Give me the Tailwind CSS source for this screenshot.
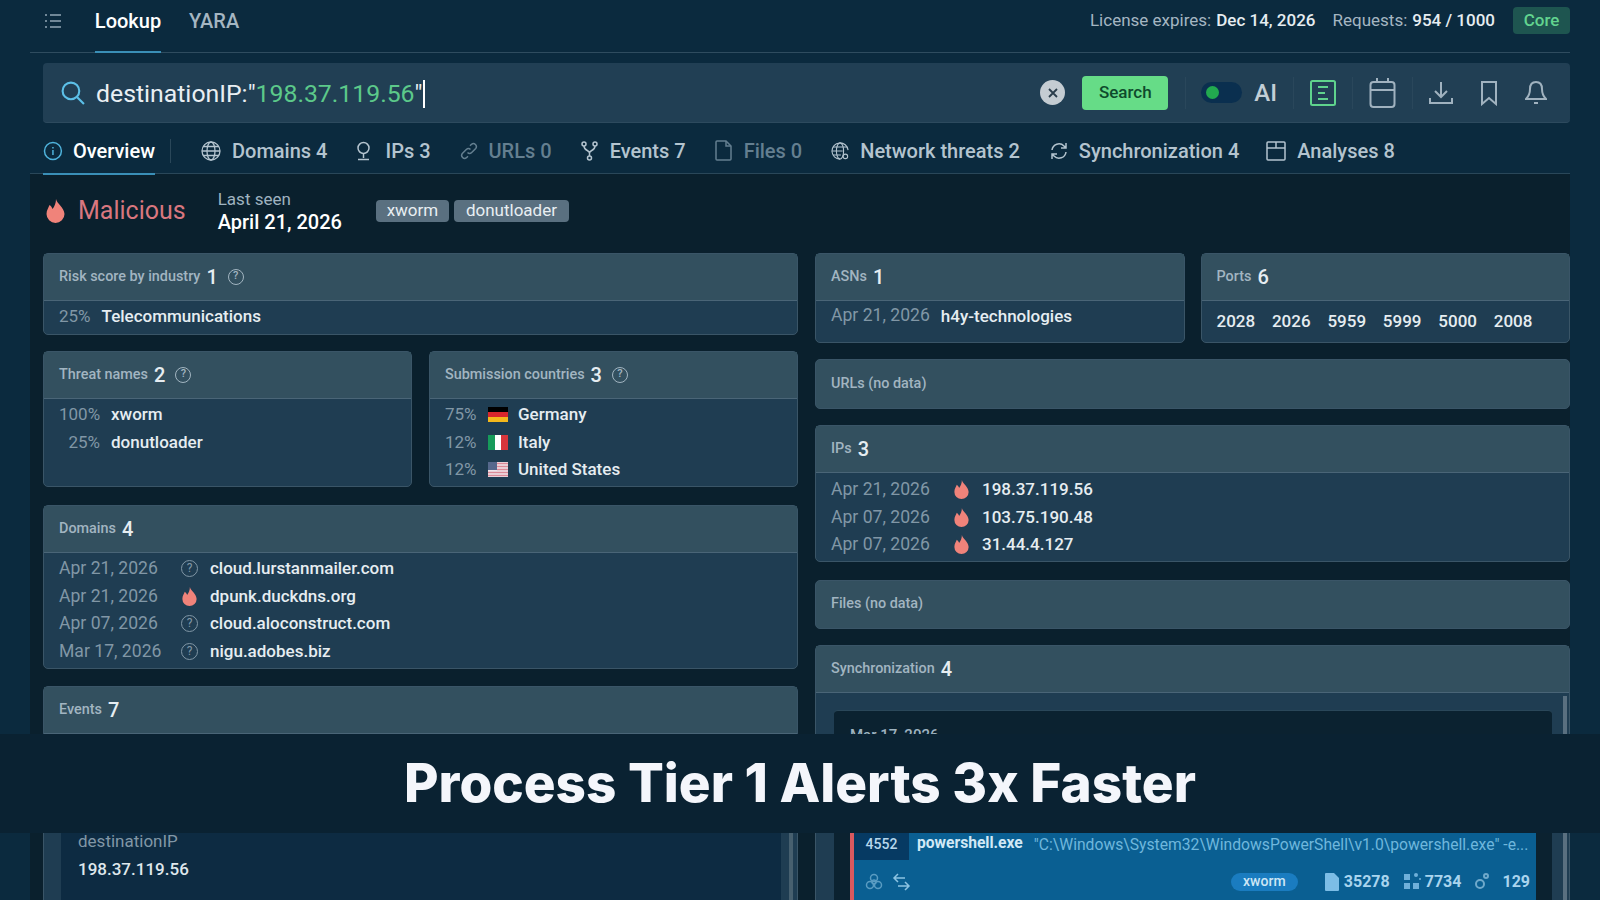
<!DOCTYPE html>
<html lang="en">
<head>
    <meta charset="UTF-8">
    <title>Lookup</title>
    <script src="https://cdn.jsdelivr.net/npm/@tailwindcss/browser@4"></script>
</head>
<body class="relative h-[900px] w-[1600px] overflow-hidden bg-[#0b2a3e] font-['Roboto',sans-serif] text-[17px] text-[#e6edf1]">
    <div class="px-[30px]">
        <!-- top bar -->
        <div class="flex h-[53px] items-center border-b border-[#2f4c5f] pb-[11px] text-[17px]">
            <svg class="ml-[14px] h-[18px] w-[18px] text-[#93a7b5]" viewBox="0 0 18 18" fill="none" stroke="currentColor" stroke-width="1.5"><path d="M6 3h11M6 9h11M6 15h11M1 3h2M1 9h2M1 15h2"/></svg>
            <div class="relative ml-[33px] flex h-[41px] w-[66px] items-center justify-center whitespace-nowrap text-[20px] font-medium text-white">Lookup<span class="absolute inset-x-0 bottom-[-12px] h-[2px] bg-[#3a8fb7]"></span></div>
            <div class="ml-[28px] text-[20px] font-medium text-[#a5b6c2]">YARA</div>
            <div class="ml-auto flex items-center">
                <span class="text-[#a5b6c2]">License expires:</span><span class="ml-[5px] font-medium text-[#e6edf1]">Dec 14, 2026</span>
                <span class="ml-[17px] text-[#a5b6c2]">Requests:</span><span class="ml-[5px] font-medium text-[#e6edf1]">954 / 1000</span>
                <span class="ml-[18px] flex h-[27px] w-[57px] items-center justify-center rounded-[4px] bg-[#1e5550] font-medium text-[#62d48f]">Core</span>
            </div>
        </div>

        <!-- search bar -->
        <div class="ml-[13px] mt-[10px] flex h-[60px] items-center rounded-[4px] border-b border-[#2d4a5e] bg-[#213f54]">
            <svg class="ml-[17px] h-[25px] w-[25px] text-[#5cc0e8]" viewBox="0 0 24 24" fill="none" stroke="currentColor" stroke-width="2"><circle cx="10.5" cy="10.5" r="8"/><path d="M16.5 16.5L23 23"/></svg>
            <div class="ml-[11px] mt-[3px] flex h-[30px] items-center text-[24.800px] text-[#e9eff3]">destinationIP:"<span class="text-[#5cc98a]">198.37.119.56</span>"<span class="h-[28px] w-[2px] bg-white"></span></div>
            <div class="ml-auto flex h-[25px] w-[25px] items-center justify-center rounded-full bg-[#c4ccd2]">
                <svg class="h-[12px] w-[12px] text-[#2a3d4b]" viewBox="0 0 12 12" fill="none" stroke="currentColor" stroke-width="1.8"><path d="M2 2l8 8M10 2l-8 8"/></svg>
            </div>
            <button class="ml-[17px] h-[34px] w-[86px] rounded-[4px] bg-[#66dc87] text-[17px] font-medium text-[#0e4b2c]">Search</button>
            <div class="ml-[17px] h-[32px] w-px bg-[#2a475b]"></div>
            <div class="ml-[15px] flex h-[21px] w-[41px] items-center rounded-full bg-[#0a2f4f] pl-[5px]"><span class="h-[13px] w-[13px] rounded-full bg-[#22a94f]"></span></div>
            <span class="ml-[12px] text-[24px] font-medium text-[#c2ced6]">AI</span>
            <div class="ml-[16px] h-[32px] w-px bg-[#2a475b]"></div>
            <svg class="ml-[16px] h-[26px] w-[26px] text-[#5fd38d]" viewBox="0 0 26 26" fill="none" stroke="currentColor" stroke-width="2"><rect x="1" y="1" width="24" height="24" rx="1.5"/><path d="M8 7h10M8 13h7M8 19h10"/></svg>
            <div class="ml-[16px] h-[32px] w-px bg-[#2a475b]"></div>
            <svg class="ml-[16px] h-[30px] w-[27px] text-[#a0b2bf]" viewBox="0 0 27 30" fill="none" stroke="currentColor" stroke-width="2"><rect x="1.5" y="4" width="24" height="25" rx="3"/><path d="M1.5 12h24M8 0v5M19 0v5"/></svg>
            <div class="ml-[16px] h-[32px] w-px bg-[#2a475b]"></div>
            <svg class="ml-[16px] h-[24px] w-[24px] text-[#a0b2bf]" viewBox="0 0 24 24" fill="none" stroke="currentColor" stroke-width="2"><path d="M12 1v14M6 10l6 6 6-6M1 17v5h22v-5"/></svg>
            <svg class="ml-[27px] h-[26px] w-[18px] text-[#a0b2bf]" viewBox="0 0 18 26" fill="none" stroke="currentColor" stroke-width="2"><path d="M2 2h14v22l-7-6-7 6z"/></svg>
            <svg class="ml-[27px] h-[26px] w-[22px] text-[#a0b2bf]" viewBox="0 0 22 26" fill="none" stroke="currentColor" stroke-width="2"><path d="M11 2c-4 0-6 3-6 7 0 5-1 7-4 10h20c-3-3-4-5-4-10 0-4-2-7-6-7z"/><path d="M9 23h4"/></svg>
            <div class="w-[23px]"></div>
        </div>

        <!-- tabs -->
        <div class="flex h-[51px] items-center border-b border-[#2a4759] pl-[13px] text-[20px] font-medium text-[#b4c4cf]">
            <div class="relative flex h-[51px] w-[112px] items-center pt-[5px] text-white">
                <svg class="h-[20px] w-[20px] text-[#4fb3dc]" viewBox="0 0 20 20" fill="none" stroke="currentColor" stroke-width="1.5"><circle cx="10" cy="10" r="8.5"/><path d="M10 9v5M10 6v1.5"/></svg>
                <span class="ml-[10px]">Overview</span>
                <span class="absolute inset-x-0 bottom-[-1px] h-[2px] bg-[#3a8fb7]"></span>
            </div>
            <div class="ml-[15px] mt-[5px] h-[24px] w-px bg-[#2a4759]"></div>
            <div class="flex items-center pt-[5px]">
                <svg class="ml-[30px] h-[20px] w-[20px]" viewBox="0 0 20 20" fill="none" stroke="currentColor" stroke-width="1.3"><circle cx="10" cy="10" r="9"/><ellipse cx="10" cy="10" rx="4" ry="9"/><path d="M1 10h18M2 5.5h16M2 14.5h16"/></svg>
                <span class="ml-[11px]">Domains 4</span>
                <svg class="ml-[29px] h-[20px] w-[15px]" viewBox="0 0 15 20" fill="none" stroke="currentColor" stroke-width="1.5"><circle cx="7.5" cy="7" r="5.5"/><path d="M7.5 12.5V17M2 18.5h11"/></svg>
                <span class="ml-[14px]">IPs 3</span>
                <svg class="ml-[29px] h-[18px] w-[18px] text-[#647f90]" viewBox="0 0 18 18" fill="none" stroke="currentColor" stroke-width="1.5"><path d="M7.5 10.5a3 3 0 0 0 4.2 0l4-4a3 3 0 0 0-4.2-4.2l-1.5 1.5M10.5 7.5a3 3 0 0 0-4.2 0l-4 4a3 3 0 0 0 4.2 4.2l1.5-1.5"/></svg>
                <span class="ml-[11px] text-[#647f90]">URLs 0</span>
                <svg class="ml-[29px] h-[20px] w-[17px]" viewBox="0 0 17 20" fill="none" stroke="currentColor" stroke-width="1.5"><circle cx="3" cy="3" r="2"/><circle cx="14" cy="3" r="2"/><circle cx="8.5" cy="17" r="2"/><path d="M3 5c0 5 5.5 4 5.5 7v3M14 5c0 5-5.5 4-5.5 7"/></svg>
                <span class="ml-[12px]">Events 7</span>
                <svg class="ml-[29px] h-[21px] w-[17px] text-[#647f90]" viewBox="0 0 17 21" fill="none" stroke="currentColor" stroke-width="1.5"><path d="M1 2a1 1 0 0 1 1-1h9l5 5v13a1 1 0 0 1-1 1H2a1 1 0 0 1-1-1z"/><path d="M11 1v5h5"/></svg>
                <span class="ml-[12px] text-[#647f90]">Files 0</span>
                <svg class="ml-[29px] h-[20px] w-[18px]" viewBox="0 0 20 20" fill="none" stroke="currentColor" stroke-width="1.2"><path d="M19 9a9 9 0 1 0-9 10"/><ellipse cx="10" cy="10" rx="4" ry="9"/><path d="M1 10h12M2 5.5h16M2 14.5h9"/><circle cx="16" cy="16" r="2.5"/></svg>
                <span class="ml-[11px]">Network threats 2</span>
                <svg class="ml-[30px] h-[18px] w-[18px]" viewBox="0 0 18 18" fill="none" stroke="currentColor" stroke-width="1.5"><path d="M2 8a7 7 0 0 1 12-4l2 2M16 10a7 7 0 0 1-12 4l-2-2M16 1v5h-5M2 17v-5h5"/></svg>
                <span class="ml-[11px]">Synchronization 4</span>
                <svg class="ml-[27px] h-[20px] w-[20px]" viewBox="0 0 20 20" fill="none" stroke="currentColor" stroke-width="1.5"><rect x="1" y="1" width="18" height="18" rx="1"/><path d="M1 7h18M10 1v6"/></svg>
                <span class="ml-[11px]">Analyses 8</span>
            </div>
        </div>

        <!-- main -->
        <div class="h-[726px] bg-[#0a202d] pl-[13px]">
            <!-- status row -->
            <div class="flex h-[79px] items-center pb-[6px]">
                <svg class="ml-[3px] h-[24px] w-[19px] text-[#f0837a]" viewBox="0 0 19 24" fill="currentColor"><path d="M10 0c1 5 8 8 8.500 15a9 9 0 0 1-18 0c0-4 2-6 3-9 1.500 1 2.500 2.500 3 4 2-2.500 3.500-6 3.500-10z"/></svg>
                <span class="ml-[13px] text-[25px] text-[#d9777f]">Malicious</span>
                <div class="ml-[32px] flex flex-col">
                    <span class="text-[17px] leading-[22px] text-[#9fb3c0]">Last seen</span>
                    <span class="text-[20px] font-medium leading-[24px] text-white">April 21, 2026</span>
                </div>
                <span class="ml-[34px] flex h-[22px] w-[73px] items-center justify-center rounded-[4px] bg-[#5a7080] text-[#e8eef2]">xworm</span>
                <span class="ml-[5px] flex h-[22px] w-[115px] items-center justify-center rounded-[4px] bg-[#5a7080] text-[#e8eef2]">donutloader</span>
            </div>

            <div class="grid grid-cols-2 gap-x-[17px]">
                <!-- left column -->
                <div class="flex flex-col">
                    <div class="h-[82px] rounded-[5px] border border-[#3a5567] bg-[#1f3d52]">
                        <div class="flex h-[47px] items-center gap-[6px] border-b border-[#4a6577] bg-[#33505f] px-[15px] pb-[1px] text-[14.400px] font-medium text-[#a2b5c1]">Risk score by industry <span class="text-[20px] text-[#e6edf1]">1</span>
                            <span class="ml-[4px] flex h-[16px] w-[16px] items-center justify-center rounded-full border border-[#a2b5c1] text-[11px]">?</span>
                        </div>
                        <div class="px-[15px] pt-[1px] leading-[28px]"><span class="text-[#8197a6]">25%</span><span class="ml-[11px] font-medium">Telecommunications</span></div>
                    </div>

                    <div class="mt-[16px] grid h-[136px] grid-cols-2 gap-[17px]">
                        <div class="rounded-[5px] border border-[#3a5567] bg-[#1f3d52]">
                            <div class="flex h-[47px] items-center gap-[6px] border-b border-[#4a6577] bg-[#33505f] px-[15px] pb-[1px] text-[14.400px] font-medium text-[#a2b5c1]">Threat names <span class="text-[20px] text-[#e6edf1]">2</span>
                                <span class="ml-[4px] flex h-[16px] w-[16px] items-center justify-center rounded-full border border-[#a2b5c1] text-[11px]">?</span>
                            </div>
                            <div class="px-[15px] pt-[2px] leading-[27.500px]">
                                <div class="flex"><span class="w-[41px] text-right text-[#8197a6]">100%</span><span class="ml-[11px] font-medium">xworm</span></div>
                                <div class="flex"><span class="w-[41px] text-right text-[#8197a6]">25%</span><span class="ml-[11px] font-medium">donutloader</span></div>
                            </div>
                        </div>
                        <div class="rounded-[5px] border border-[#3a5567] bg-[#1f3d52]">
                            <div class="flex h-[47px] items-center gap-[6px] border-b border-[#4a6577] bg-[#33505f] px-[15px] pb-[1px] text-[14.400px] font-medium text-[#a2b5c1]">Submission countries <span class="text-[20px] text-[#e6edf1]">3</span>
                                <span class="ml-[4px] flex h-[16px] w-[16px] items-center justify-center rounded-full border border-[#a2b5c1] text-[11px]">?</span>
                            </div>
                            <div class="px-[15px] pt-[2px] leading-[27.500px]">
                                <div class="flex items-center"><span class="w-[43px] text-[#8197a6]">75%</span>
                                    <span class="flex h-[15px] w-[20px] flex-col"><i class="flex-1 bg-black"></i><i class="flex-1 bg-[#d8262c]"></i><i class="flex-1 bg-[#f4b81c]"></i></span>
                                    <span class="ml-[10px] font-medium">Germany</span></div>
                                <div class="flex items-center"><span class="w-[43px] text-[#8197a6]">12%</span>
                                    <span class="flex h-[15px] w-[20px]"><i class="flex-1 bg-[#169b5a]"></i><i class="flex-1 bg-white"></i><i class="flex-1 bg-[#d8363c]"></i></span>
                                    <span class="ml-[10px] font-medium">Italy</span></div>
                                <div class="flex items-center"><span class="w-[43px] text-[#8197a6]">12%</span>
                                    <svg class="h-[15px] w-[20px]" viewBox="0 0 20 15"><rect width="20" height="15" fill="#f0e4ea"/><path d="M9 1.500h11M9 4.500h11M9 7.500h11M0 10.500h20M0 13.500h20" stroke="#dc8a98" stroke-width="1.300"/><rect width="9" height="8" fill="#56688c"/></svg>
                                    <span class="ml-[10px] font-medium">United States</span></div>
                            </div>
                        </div>
                    </div>

                    <div class="mt-[18px] h-[164px] rounded-[5px] border border-[#3a5567] bg-[#1f3d52]">
                        <div class="flex h-[47px] items-center gap-[6px] border-b border-[#4a6577] bg-[#33505f] px-[15px] pb-[1px] text-[14.400px] font-medium text-[#a2b5c1]">Domains <span class="text-[20px] text-[#e6edf1]">4</span></div>
                        <div class="px-[15px] pt-[2px] leading-[27.500px]">
                            <div class="flex items-center"><span class="w-[122px] text-[17.600px] text-[#8197a6]">Apr 21, 2026</span><span class="flex h-[17px] w-[17px] items-center justify-center rounded-full border border-[#8197a6] text-[12px] text-[#8197a6]">?</span><span class="ml-[12px] font-medium">cloud.lurstanmailer.com</span></div>
                            <div class="flex items-center"><span class="w-[122px] text-[17.600px] text-[#8197a6]">Apr 21, 2026</span><svg class="h-[19px] w-[17px] text-[#f0837a]" viewBox="0 0 19 24" fill="currentColor"><path d="M10 0c1 5 8 8 8.500 15a9 9 0 0 1-18 0c0-4 2-6 3-9 1.500 1 2.500 2.500 3 4 2-2.500 3.500-6 3.500-10z"/></svg><span class="ml-[12px] font-medium">dpunk.duckdns.org</span></div>
                            <div class="flex items-center"><span class="w-[122px] text-[17.600px] text-[#8197a6]">Apr 07, 2026</span><span class="flex h-[17px] w-[17px] items-center justify-center rounded-full border border-[#8197a6] text-[12px] text-[#8197a6]">?</span><span class="ml-[12px] font-medium">cloud.aloconstruct.com</span></div>
                            <div class="flex items-center"><span class="w-[122px] text-[17.600px] text-[#8197a6]">Mar 17, 2026</span><span class="flex h-[17px] w-[17px] items-center justify-center rounded-full border border-[#8197a6] text-[12px] text-[#8197a6]">?</span><span class="ml-[12px] font-medium">nigu.adobes.biz</span></div>
                        </div>
                    </div>

                    <div class="mt-[17px] h-[240px] rounded-t-[5px] border border-[#3a5567] bg-[#1f3d52]">
                        <div class="flex h-[47px] items-center gap-[6px] border-b border-[#4a6577] bg-[#33505f] px-[15px] pb-[1px] text-[14.400px] font-medium text-[#a2b5c1]">Events <span class="text-[20px] text-[#e6edf1]">7</span></div>
                        <div class="flex h-[192px]">
                            <div class="ml-[17px] mt-[14px] w-[720px] bg-[#0d2b42] pl-[17px] pt-[81px]">
                                <div class="text-[#8197a6]">destinationIP</div>
                                <div class="mt-[2px] font-medium text-[#dfe7ec]">198.37.119.56</div>
                            </div>
                            <div class="ml-[8px] mt-[14px] w-[4px] bg-[#47606f]"></div>
                        </div>
                    </div>
                </div>

                <!-- right column -->
                <div class="flex flex-col">
                    <div class="grid h-[90px] grid-cols-2 gap-[16px]">
                        <div class="rounded-[5px] border border-[#3a5567] bg-[#1f3d52]">
                            <div class="flex h-[47px] items-center gap-[6px] border-b border-[#4a6577] bg-[#33505f] px-[15px] pb-[1px] text-[14.400px] font-medium text-[#a2b5c1]">ASNs <span class="text-[20px] text-[#e6edf1]">1</span></div>
                            <div class="flex px-[15px] pt-[1px] leading-[28px]"><span class="mt-[-1px] text-[17.600px] text-[#8197a6]">Apr 21, 2026</span><span class="ml-[11px] font-medium">h4y-technologies</span></div>
                        </div>
                        <div class="rounded-[5px] border border-[#3a5567] bg-[#1f3d52]">
                            <div class="flex h-[47px] items-center gap-[6px] border-b border-[#4a6577] bg-[#33505f] px-[15px] pb-[1px] text-[14.400px] font-medium text-[#a2b5c1]">Ports <span class="text-[20px] text-[#e6edf1]">6</span></div>
                            <div class="flex gap-[16.800px] px-[15px] pt-[6px] font-medium leading-[28px]"><span>2028</span><span>2026</span><span>5959</span><span>5999</span><span>5000</span><span>2008</span></div>
                        </div>
                    </div>

                    <div class="mt-[16px] flex h-[50px] items-center rounded-[5px] border border-[#3a5567] bg-[#33505f] px-[15px] pb-[1px] text-[14.400px] font-medium text-[#a2b5c1]">URLs (no data)</div>

                    <div class="mt-[16px] h-[137px] rounded-[5px] border border-[#3a5567] bg-[#1f3d52]">
                        <div class="flex h-[47px] items-center gap-[6px] border-b border-[#4a6577] bg-[#33505f] px-[15px] pb-[1px] text-[14.400px] font-medium text-[#a2b5c1]">IPs <span class="text-[20px] text-[#e6edf1]">3</span></div>
                        <div class="px-[15px] pt-[3px] leading-[27.500px]">
                            <div class="flex items-center"><span class="w-[122px] text-[17.600px] text-[#8197a6]">Apr 21, 2026</span><svg class="h-[19px] w-[17px] text-[#f0837a]" viewBox="0 0 19 24" fill="currentColor"><path d="M10 0c1 5 8 8 8.500 15a9 9 0 0 1-18 0c0-4 2-6 3-9 1.500 1 2.500 2.500 3 4 2-2.500 3.500-6 3.500-10z"/></svg><span class="ml-[12px] font-medium">198.37.119.56</span></div>
                            <div class="flex items-center"><span class="w-[122px] text-[17.600px] text-[#8197a6]">Apr 07, 2026</span><svg class="h-[19px] w-[17px] text-[#f0837a]" viewBox="0 0 19 24" fill="currentColor"><path d="M10 0c1 5 8 8 8.500 15a9 9 0 0 1-18 0c0-4 2-6 3-9 1.500 1 2.500 2.500 3 4 2-2.500 3.500-6 3.500-10z"/></svg><span class="ml-[12px] font-medium">103.75.190.48</span></div>
                            <div class="flex items-center"><span class="w-[122px] text-[17.600px] text-[#8197a6]">Apr 07, 2026</span><svg class="h-[19px] w-[17px] text-[#f0837a]" viewBox="0 0 19 24" fill="currentColor"><path d="M10 0c1 5 8 8 8.500 15a9 9 0 0 1-18 0c0-4 2-6 3-9 1.500 1 2.500 2.500 3 4 2-2.500 3.500-6 3.500-10z"/></svg><span class="ml-[12px] font-medium">31.44.4.127</span></div>
                        </div>
                    </div>

                    <div class="mt-[18px] flex h-[49px] items-center rounded-[5px] border border-[#3a5567] bg-[#33505f] px-[15px] pb-[1px] text-[14.400px] font-medium text-[#a2b5c1]">Files (no data)</div>

                    <div class="mt-[16px] h-[260px] rounded-t-[5px] border border-[#3a5567] bg-[#1f3d52]">
                        <div class="flex h-[47px] items-center gap-[6px] border-b border-[#4a6577] bg-[#33505f] px-[15px] pb-[1px] text-[14.400px] font-medium text-[#a2b5c1]">Synchronization <span class="text-[20px] text-[#e6edf1]">4</span></div>
                        <div class="flex h-[212px]">
                            <div class="ml-[18px] mt-[17px] h-[195px] w-[718px] rounded-t-[4px] border-t border-[#2a4759] bg-[#0b2230] px-[16px] pt-[13px]">
                                <div class="h-[101px] text-[15px] font-medium text-[#9fb3c0]">Mar 17, 2026</div>
                                <div class="h-[75px] border-l-[4px] border-[#d9595f] bg-[#0a5f92]">
                                    <div class="flex h-[35px]">
                                        <div class="flex h-[35px] w-[55px] items-end justify-center bg-[#063a63] pb-[5px] text-[14px] font-medium text-[#b7d8ec]">4552</div>
                                        <div class="ml-[8px] self-end pb-[5px] text-[15.600px] font-bold text-[#d2e9f6]">powershell.exe</div>
                                        <div class="ml-[11px] self-end pb-[3px] text-[15.700px] text-[#6fb7dd]">"C:\Windows\System32\WindowsPowerShell\v1.0\powershell.exe" -e...</div>
                                    </div>
                                    <div class="flex h-[40px] items-center pr-[6px] pt-[3px] text-[16px] font-bold text-[#a9d4ee]">
                                        <svg class="ml-[11px] h-[18px] w-[18px] text-[#5a9cc2]" viewBox="0 0 18 18" fill="none" stroke="currentColor" stroke-width="1.500"><circle cx="9" cy="9" r="2"/><circle cx="9" cy="5" r="3.500"/><circle cx="5" cy="12" r="3.500"/><circle cx="13" cy="12" r="3.500"/></svg>
                                        <svg class="ml-[9px] h-[18px] w-[19px] text-[#8cc3e2]" viewBox="0 0 19 18" fill="none" stroke="currentColor" stroke-width="1.500"><path d="M13 5H2M6 1L2 5l4 4M6 13h11M13 9l4 4-4 4"/></svg>
                                        <span class="ml-auto flex h-[18px] w-[67px] items-center justify-center rounded-full bg-[#1a7cc0] text-[14px] font-medium text-[#cde6f5]">xworm</span>
                                        <svg class="ml-[27px] h-[18px] w-[14px] text-[#7cbde6]" viewBox="0 0 14 18" fill="currentColor"><path d="M0 1a1 1 0 0 1 1-1h8l5 5v12a1 1 0 0 1-1 1H1a1 1 0 0 1-1-1z"/></svg>
                                        <span class="ml-[5px]">35278</span>
                                        <svg class="ml-[14px] h-[17px] w-[17px] text-[#6fb0da]" viewBox="0 0 17 17" fill="currentColor"><rect y="1" width="6" height="6"/><rect y="10" width="6" height="6"/><rect x="9" y="10" width="6" height="6"/><circle cx="12" cy="2" r="2"/><circle cx="16" cy="6" r="1"/></svg>
                                        <span class="ml-[4px]">7734</span>
                                        <svg class="ml-[13px] h-[17px] w-[15px] text-[#6fa9cb]" viewBox="0 0 15 17" fill="none" stroke="currentColor" stroke-width="2"><circle cx="6" cy="11" r="4"/><circle cx="12" cy="3" r="2"/></svg>
                                        <span class="ml-[13px]">129</span>
                                    </div>
                                </div>
                            </div>
                            <div class="ml-[11px] mt-[3px] w-[4px] bg-[#5a7080]"></div>
                        </div>
                    </div>
                </div>
            </div>
        </div>
    </div>

    <!-- caption strip -->
    <div class="absolute inset-x-0 top-[734px] flex h-[99px] items-center justify-center bg-[#0a2232] font-['Inter',sans-serif] text-[53px] font-extrabold text-[#f4f6fb]">Process Tier 1 Alerts 3x Faster</div>
</body>
</html>
